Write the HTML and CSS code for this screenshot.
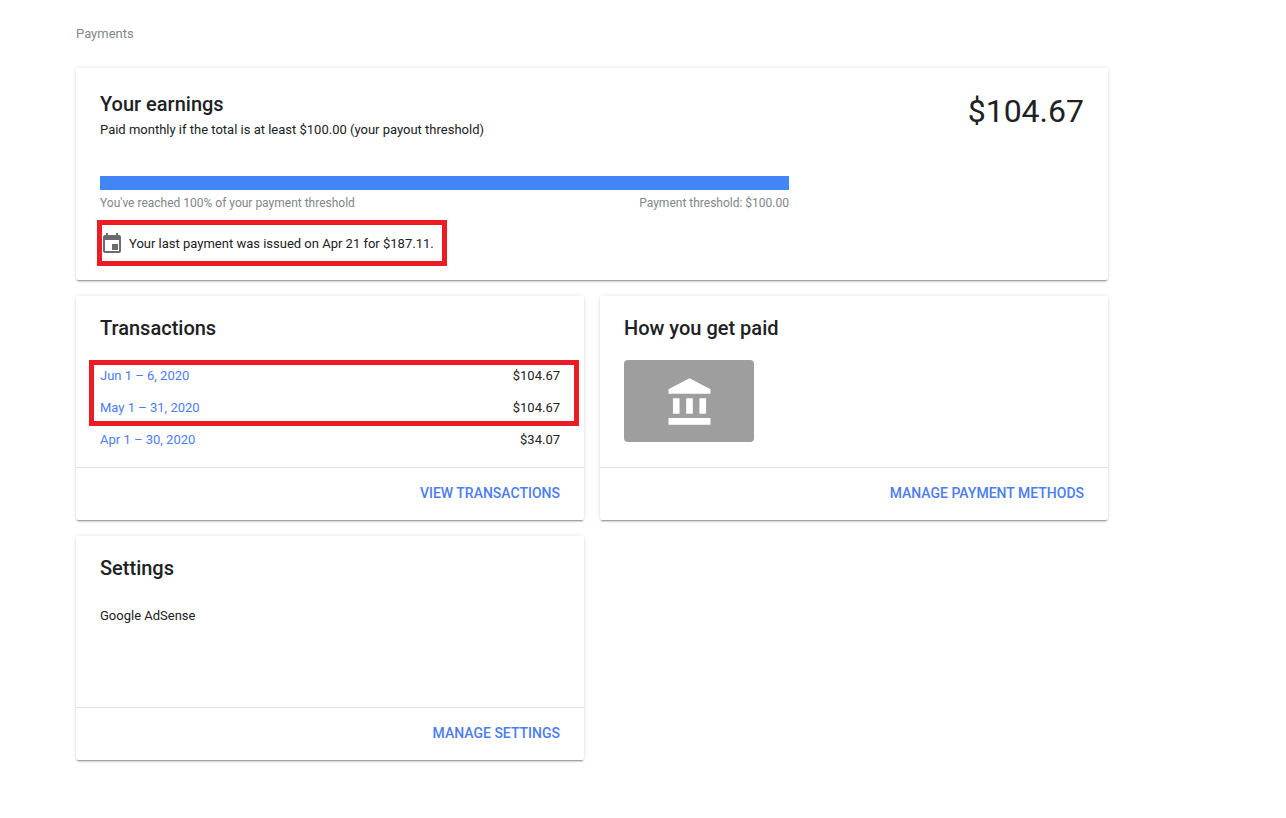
FILE: index.html
```html
<!DOCTYPE html>
<html lang="en">
<head>
<meta charset="utf-8">
<title>Payments</title>
<link rel="stylesheet" href="styles.css">
</head>
<body>
<main class="page">
  <div class="crumb">Payments</div>
  <div class="grid">
    <section class="card wide earnings">
      <div class="earn-head">
        <div>
          <h2 class="title">Your earnings</h2>
          <p class="sub">Paid monthly if the total is at least $100.00 (your payout threshold)</p>
        </div>
        <div class="amount">$104.67</div>
      </div>
      <div class="progress"></div>
      <div class="progress-labels"><span>You've reached 100% of your payment threshold</span><span>Payment threshold: $100.00</span></div>
      <div class="last-payment">
        <svg class="cal" width="24" height="24" viewBox="0 -1 24 24"><path fill="#696b6e" d="M18 12h-6v6h6v-6zM16 1v2H8V1H6v2H5c-1.11 0-1.99.9-1.99 2L3 19c0 1.1.89 2 2 2h14c1.1 0 2-.9 2-2V5c0-1.1-.9-2-2-2h-1V1h-2zm3 18H5V8h14v11z"/></svg>
        <span>Your last payment was issued on Apr 21 for $187.11.</span>
        <div class="mark"></div>
      </div>
    </section>

    <section class="card">
      <div class="card-body">
        <h2 class="title">Transactions</h2>
        <div class="rows">
          <div class="mark mark-rows"></div>
          <div class="row"><a class="link">Jun 1 – 6, 2020</a><span>$104.67</span></div>
          <div class="row"><a class="link">May 1 – 31, 2020</a><span>$104.67</span></div>
          <div class="row"><a class="link">Apr 1 – 30, 2020</a><span>$34.07</span></div>
        </div>
      </div>
      <div class="card-foot"><a class="action">VIEW TRANSACTIONS</a></div>
    </section>

    <section class="card">
      <div class="card-body">
        <h2 class="title">How you get paid</h2>
        <div class="bank">
          <svg width="53" height="53" viewBox="-0.5 -0.5 24 24"><path fill="#fff" d="M4 10v7h3v-7H4zm6 0v7h3v-7h-3zM2 22h19v-3H2v3zm14-12v7h3v-7h-3zM11.5 1 2 6v2h19V6l-9.5-5z"/></svg>
        </div>
      </div>
      <div class="card-foot"><a class="action">MANAGE PAYMENT METHODS</a></div>
    </section>

    <section class="card">
      <div class="card-body">
        <h2 class="title">Settings</h2>
        <p class="product">Google AdSense</p>
      </div>
      <div class="card-foot"><a class="action">MANAGE SETTINGS</a></div>
    </section>
  </div>
</main>
</body>
</html>
```
FILE: styles.css
```css
* { box-sizing: border-box; }
html, body { margin: 0; height: 100%; overflow: hidden; background: #fff; }
body { font-family: Roboto, "Liberation Sans", sans-serif; font-size: 13px; color: #202124; }
.page { width: 1032px; margin-left: 76px; padding-top: 26px; }
.crumb { font-size: 13px; line-height: 15px; color: #80868b; margin-bottom: 27px; }
.grid { display: grid; grid-template-columns: 508px 508px; gap: 16px; }
.card { display: flex; flex-direction: column; height: 224px; background: #fff; border-radius: 2px; box-shadow: 0 2px 2px -1px rgba(0,0,0,.45), 0 0 4px rgba(0,0,0,.12); }
.wide { grid-column: 1 / 3; height: 212px; padding: 24px; }
.title { margin: 0; font-size: 20px; line-height: 24px; font-weight: 500; color: #202124; }
.earn-head { display: flex; justify-content: space-between; height: 84px; }
.sub { margin: 6px 0 0; font-size: 13px; line-height: 15px; }
.amount { font-size: 32px; line-height: 40px; margin-top: -1px; }
.progress { width: 689px; height: 14px; background: #4285f4; }
.progress-labels { width: 689px; display: flex; justify-content: space-between; font-size: 12px; line-height: 14px; color: #80868b; margin-top: 6px; }
.last-payment { position: relative; display: flex; align-items: center; gap: 5px; margin-top: 20px; height: 26px; }
.cal { flex: none; }
.mark { position: absolute; left: -3px; top: -10px; width: 350px; height: 46px; border: 5px solid #ed1c24; pointer-events: none; }
.card-body { height: 171px; padding: 20px 24px 0; }
.rows { position: relative; margin-top: 19px; }
.mark-rows { left: -11px; top: 1px; width: 490px; height: 66px; }
.row { display: flex; justify-content: space-between; align-items: center; height: 32px; }
.link { color: #4c7cf3; }
.card-foot { height: 53px; border-top: 1px solid #e0e0e0; display: flex; align-items: center; justify-content: flex-end; padding: 0 24px 2px; }
.action { font-size: 14px; font-weight: 500; color: #4c7cf3; }
.bank { width: 130px; height: 82px; margin-top: 20px; background: #9e9e9e; border-radius: 4px; display: flex; align-items: center; justify-content: center; }
.product { margin: 28px 0 0; line-height: 15px; }
```
